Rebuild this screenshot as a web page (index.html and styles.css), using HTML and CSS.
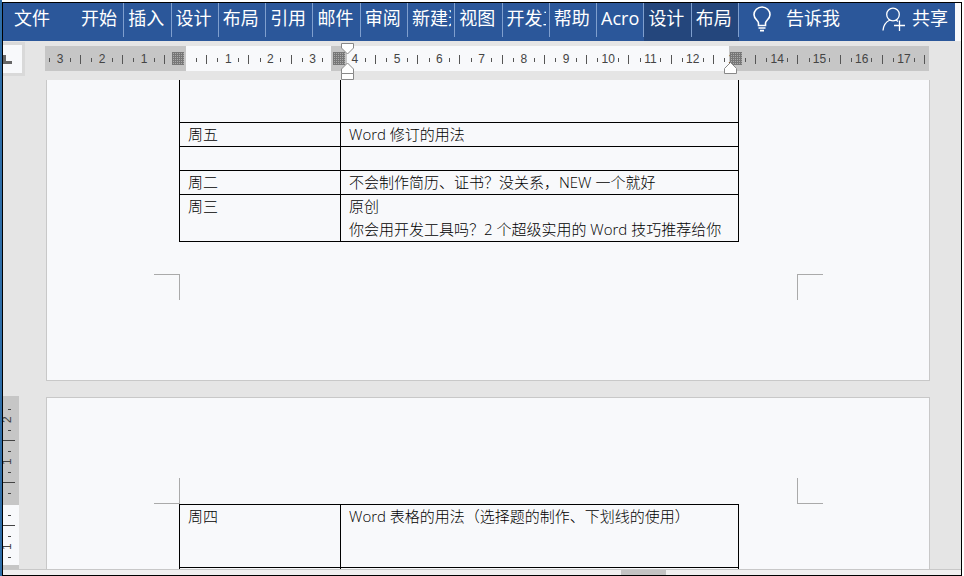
FILE: index.html
```html
<!DOCTYPE html>
<html lang="zh-CN">
<head>
  <meta charset="UTF-8" />
  <meta name="viewport" content="width=device-width, initial-scale=1.0" />
  <title>Word</title>
  <link rel="stylesheet" href="styles.css">
</head>
<body>
<div class="app">

  <header class="top">
    <nav class="menu">
      <button class="file">文件</button>
      <div class="tabs">
        <button class="tab"><span>开始</span></button>
        <button class="tab"><span>插入</span></button>
        <button class="tab"><span>设计</span></button>
        <button class="tab"><span>布局</span></button>
        <button class="tab"><span>引用</span></button>
        <button class="tab"><span>邮件</span></button>
        <button class="tab"><span>审阅</span></button>
        <button class="tab"><span>新建选项卡</span></button>
        <button class="tab"><span>视图</span></button>
        <button class="tab"><span>开发工具</span></button>
        <button class="tab"><span>帮助</span></button>
        <button class="tab"><span>Acrobat</span></button>
        <button class="tab context"><span>设计</span></button>
        <button class="tab context"><span>布局</span></button>
      </div>
      <button class="tell">
        <svg width="20" height="26" viewBox="0 0 20 26" fill="none" stroke="#fff" stroke-width="1.6">
          <path d="M6.5 19.5V17C6.5 14.5 2 13 2 8.8A8 7.8 0 0 1 18 8.8C18 13 13.5 14.5 13.5 17V19.5Z" />
          <path d="M6.5 22H13.5M8 24.6H12" />
        </svg>
        告诉我
      </button>
      <button class="share">
        <svg width="24" height="26" viewBox="0 0 24 26" fill="none" stroke="#fff" stroke-width="1.3">
          <circle cx="11" cy="8.5" r="6.3" />
          <path d="M1 24.5C1.5 19 4.5 15.5 8 14M14 14L16 15.5M17.5 14.5V25M12 19.5H23" />
        </svg>
        共享
      </button>
    </nav>
  </header>

  <div class="ruler-bar">
    <button class="tab-stop" aria-label="制表符">
      <svg width="10" height="10" viewBox="0 0 10 10"><path d="M0 0H3V6H9V9H0Z" fill="#666" /></svg>
    </button>
    <div class="ruler">
      <div class="before">
        <span class="unit">3</span><span class="unit">2</span><span class="unit">1</span><span class="unit half"></span>
      </div>
      <div class="after">
        <span class="unit half"></span>
        <span class="unit">1</span><span class="unit">2</span><span class="unit">3</span><span class="unit">4</span>
        <span class="unit">5</span><span class="unit">6</span><span class="unit">7</span><span class="unit">8</span>
        <span class="unit">9</span><span class="unit">10</span><span class="unit">11</span><span class="unit">12</span>
        <span class="unit">13</span><span class="unit">14</span><span class="unit">15</span><span class="unit">16</span>
        <span class="unit">17</span>
      </div>
      <i class="column-mark mark-1"></i>
      <i class="column-mark mark-2"></i>
      <i class="column-mark mark-3"></i>
      <svg class="indent indent-left" width="13" height="37" viewBox="0 0 13 37" fill="#fff" stroke="#888">
        <path d="M.5 .5H12.5V5L6.5 11L.5 5Z" />
        <path d="M.5 30.5V26L6.5 20L12.5 26V30.5Z" />
        <path d="M.5 30.5H12.5V36.5H.5Z" />
      </svg>
      <svg class="indent indent-right" width="13" height="12" viewBox="0 0 13 12" fill="#fff" stroke="#888">
        <path d="M.5 11.5V6.5L6.5 .5L12.5 6.5V11.5Z" />
      </svg>
    </div>
  </div>

  <main class="workspace">
    <div class="side-ruler">
      <div class="side-margin">
        <span class="side-unit">2</span><span class="side-unit">1</span><span class="side-unit side-half"></span>
      </div>
      <div class="side-body">
        <span class="side-unit side-half"></span><span class="side-unit">1</span>
      </div>
    </div>
    <div class="pages">
      <section class="page page-end">
        <table class="plan">
          <tr class="blank-tall"><td></td><td></td></tr>
          <tr><td>周五</td><td>Word 修订的用法</td></tr>
          <tr><td></td><td></td></tr>
          <tr><td>周二</td><td>不会制作简历、证书？没关系，NEW 一个就好</td></tr>
          <tr><td>周三</td><td>原创<br>你会用开发工具吗？2 个超级实用的 Word 技巧推荐给你</td></tr>
        </table>
        <div class="corners corners-bottom"><i></i><i></i></div>
      </section>
      <section class="page page-start">
        <div class="corners corners-top"><i></i><i></i></div>
        <table class="plan">
          <tr class="tall"><td>周四</td><td>Word 表格的用法（选择题的制作、下划线的使用）</td></tr>
          <tr><td></td><td></td></tr>
        </table>
      </section>
    </div>
  </main>

  <footer class="scrollbar"><div class="thumb"></div></footer>
</div>
</body>
</html>
```
FILE: styles.css
```css
* {
  box-sizing: border-box;
}
body {
  margin: 0;
  padding: 2px 2px 0 0;
  height: 100vh;
  overflow: hidden;
  background-color: #fff;
  border-left: 2px solid #2f6ea8;
  font-family: "Open Sans", "Noto Sans CJK SC", sans-serif;
  color: #222;
}
button {
  border: none;
  padding: 0;
  background: none;
  font: inherit;
  color: inherit;
}
.app {
  height: 100%;
  display: flex;
  flex-direction: column;
  border: 1px solid #000;
  background-color: #e5e5e5;
}

/* menu */
.top {
  padding-right: 6px;
  background-color: #f8f9fb;
}
.menu {
  display: flex;
  height: 38px;
  background-color: #2b579a;
  color: #fff;
  font-size: 18px;
  line-height: 30px;
}
.menu button {
  display: flex;
  align-items: flex-start;
  white-space: nowrap;
}
.file {
  width: 74px;
  padding-left: 11px;
}
.tabs {
  display: flex;
  flex: 0 0 662px;
}
.menu .tab {
  flex: 1;
  padding: 0 4px;
  background: linear-gradient(#7f9fce, #7f9fce) right top / 1px 34px no-repeat;
}
.menu .context {
  background-color: #24467c;
}
.tab span {
  width: 39px;
  overflow: hidden;
  text-align: left;
}
.tell {
  margin-left: 13px;
  gap: 14px;
}
.share {
  margin-left: auto;
  margin-right: 7px;
  gap: 6px;
}
.menu svg {
  margin-top: 3px;
}

/* top ruler */
.ruler-bar {
  display: flex;
  align-items: flex-start;
  height: 39px;
  padding-right: 32px;
}
.tab-stop {
  width: 22px;
  height: 34px;
  margin-top: 1px;
  margin-right: 20px;
  border: 3px solid #d9d9d9;
  border-left: none;
  background-color: #f8f9fb;
  text-align: left;
}
.ruler {
  position: relative;
  flex: 1;
  display: flex;
  height: 25px;
  margin-top: 5px;
  background: linear-gradient(90deg, #c6c6c6 141px, #f8f9fb 141px, #f8f9fb 286px, #c6c6c6 286px, #c6c6c6 302px, #f8f9fb 302px, #f8f9fb 684px, #c6c6c6 684px);
  font-family: "Liberation Sans", sans-serif;
  font-size: 12px;
  line-height: 26px;
  color: #444;
}
.before {
  display: flex;
  justify-content: flex-end;
  width: 141px;
  overflow: hidden;
}
.before .unit {
  flex: 0 0 42px;
}
.before .half {
  flex-basis: 21px;
}
.after {
  flex: 1;
  display: grid;
  grid-template-columns: 1fr repeat(17, 2fr);
  padding-right: 4px;
}
.unit {
  text-align: center;
  background:
    linear-gradient(#555, #555) 25% 12px / 1px 4px no-repeat,
    linear-gradient(#555, #555) 75% 12px / 1px 4px no-repeat,
    linear-gradient(#555, #555) right 9px / 1px 9px no-repeat;
}
.half {
  background:
    linear-gradient(#555, #555) center 12px / 1px 4px no-repeat,
    linear-gradient(#555, #555) right 9px / 1px 9px no-repeat;
}
.before .half {
  background: linear-gradient(#555, #555) center 12px / 1px 4px no-repeat;
}
.column-mark {
  position: absolute;
  top: 6px;
  width: 12px;
  height: 13px;
  background-color: #aaa;
  background-image:
    repeating-linear-gradient(90deg, #777 0 1px, transparent 1px 2px),
    repeating-linear-gradient(#777 0 1px, transparent 1px 2px);
}
.mark-1 {
  left: 127px;
}
.mark-2 {
  left: 288px;
}
.mark-3 {
  left: 685px;
}
.indent {
  position: absolute;
}
.indent-left {
  left: 296px;
  top: -3px;
}
.indent-right {
  left: 679px;
  top: 16px;
}

/* document area */
.workspace {
  flex: 1;
  min-height: 0;
  display: flex;
  overflow: hidden;
}
.side-ruler {
  width: 16px;
  margin-top: 316px;
  background-color: #c6c6c6;
  font-family: "Liberation Sans", sans-serif;
  font-size: 12px;
  line-height: 9px;
  color: #444;
}
.side-margin {
  display: flex;
  flex-direction: column;
  justify-content: flex-end;
  height: 109px;
  padding-bottom: 1px;
}
.side-body {
  height: 60px;
  overflow: hidden;
  background-color: #f8f9fb;
}
.side-unit {
  display: block;
  width: 16px;
  height: 42px;
  padding-left: 7px;
  writing-mode: vertical-rl;
  transform: rotate(180deg);
  text-align: center;
  background:
    linear-gradient(#444, #444) 8px 25% / 3px 1px no-repeat,
    linear-gradient(#444, #444) 8px 75% / 3px 1px no-repeat,
    linear-gradient(#444, #444) right top / 12px 1px no-repeat;
}
.side-half {
  height: 21px;
  background:
    linear-gradient(#444, #444) 8px center / 3px 1px no-repeat,
    linear-gradient(#444, #444) right top / 12px 1px no-repeat;
}
.side-margin .side-half {
  background: linear-gradient(#444, #444) 8px center / 3px 1px no-repeat;
}
.pages {
  flex: 1;
  padding: 0 31px 0 27px;
}
.page {
  padding: 0 132px;
  background-color: #f8f9fb;
  border: 1px solid #c8c8c8;
}
.page-end {
  height: 301px;
  border-top: none;
}
.page-start {
  height: 260px;
  margin-top: 16px;
  padding-top: 80px;
}
.plan {
  width: calc(100% - 58px);
  border-collapse: collapse;
  table-layout: fixed;
  font-size: 15px;
  font-weight: 300;
  line-height: 23px;
  color: #000;
}
.plan td {
  height: 24px;
  padding: 0 0 0 8px;
  border: 1px solid #000;
  vertical-align: top;
  white-space: nowrap;
}
.plan td:first-child {
  width: 161px;
}
.plan .blank-tall td {
  height: 42px;
  border-top: none;
}
.plan .tall td {
  height: 63px;
}

/* margin corner marks */
.corners {
  display: flex;
  justify-content: space-between;
  margin: 0 -26px 0 -25px;
}
.corners i {
  width: 26px;
  height: 26px;
  border: 0 solid #aaa;
}
.corners i:first-child {
  border-right-width: 1px;
}
.corners i:last-child {
  border-left-width: 1px;
}
.corners-bottom {
  margin-top: 32px;
}
.corners-bottom i {
  border-top-width: 1px;
}
.corners-top i {
  border-bottom-width: 1px;
}

/* bottom scroll bar */
.scrollbar {
  height: 6px;
  padding-left: 618px;
  border-top: 1px solid #c8c8c8;
  background-color: #f0f0f0;
}
.thumb {
  width: 45px;
  height: 100%;
  background-color: #c3c3c3;
}
```
